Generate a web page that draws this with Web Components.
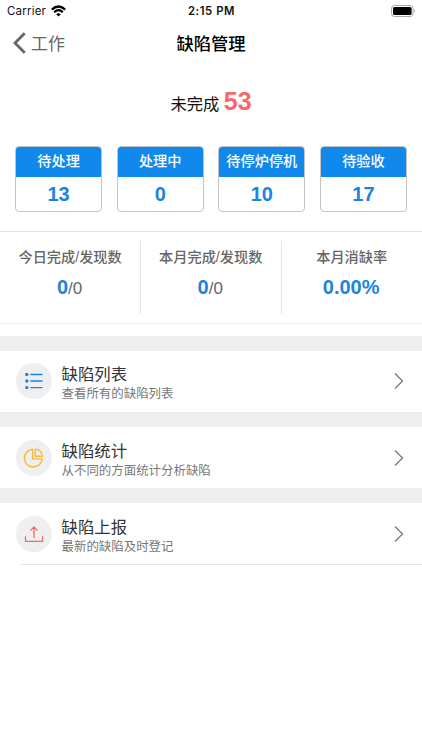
<!DOCTYPE html>
<html lang="zh-CN">
<head>
<meta charset="utf-8">
<title>缺陷管理</title>
<style>
	body {
		margin: 0;
		background: #fff;
		font-family: "Liberation Sans", "Noto Sans CJK SC", sans-serif;
	}
</style>
</head>
<body>
<defect-page></defect-page>

<script>
(function() {
	function attach(element, html) {
		const template = document.createElement('template');
		template.innerHTML = html;
		element.attachShadow({ mode: 'open' });
		element.shadowRoot.appendChild(template.content.cloneNode(true));
	}

	const icons = {
		list: `<svg viewBox="0 0 36 36" fill="none" stroke="#1b84de" stroke-width="1.3" stroke-linecap="round">
			<path d="M14.8 11.5H26M14.8 18H26M14.8 24.6H26"/>
			<g fill="#1b84de" stroke="none"><circle cx="10.8" cy="11.5" r="1.7"/><circle cx="10.8" cy="18" r="1.7"/><circle cx="10.8" cy="24.6" r="1.7"/></g>
		</svg>`,
		chart: `<svg viewBox="0 0 36 36" fill="none" stroke="#f8b739" stroke-width="1.4" stroke-linejoin="round">
			<path d="M16.6 9.3A8.9 8.9 0 1 0 26.2 18.9H16.6Z"/>
			<path d="M19.2 9.1V16.3H26.5A7.3 7.3 0 0 0 19.2 9.1Z"/>
		</svg>`,
		upload: `<svg viewBox="0 0 36 36" fill="none" stroke="#fa626a" stroke-width="1.2" stroke-linecap="round" stroke-linejoin="round">
			<path d="M9.5 20.7V25.4H26.5V20.7M18 21.7V11M14.9 14.2L18 11L21.1 14.2"/>
		</svg>`,
	};

	class StatusBar extends HTMLElement {
		connectedCallback() {
			attach(this, `
			<style>
			:host {
				display: grid;
				grid-template-columns: 1fr auto 1fr;
				align-items: center;
				height: 22px;
				padding: 0 6px 0 7px;
				font: 500 11.5px/22px Inter, sans-serif;
				color: #111;
			}
			.carrier {
				display: flex;
				align-items: center;
				gap: 5px;
				font-weight: 400;
				letter-spacing: 0.2px;
			}
			.time {
				font-weight: 600;
				font-size: 11.3px;
				letter-spacing: 0.55px;
			}
			.battery {
				justify-self: end;
			}
			svg {
				display: block;
			}
			</style>
			<div class="carrier"><span><slot></slot></span>
				<svg width="15" height="12" viewBox="0 0 15 12" fill="none" stroke="#000" stroke-width="2.2">
					<path d="M.8 4.6Q7.5-1.6 14.2 4.6M3.2 7.2Q7.5 3.2 11.8 7.2"/>
					<path d="M5.2 9.3Q7.5 7.2 9.8 9.3L7.5 11.6Z" fill="#000" stroke="none"/>
				</svg>
			</div>
			<div class="time"><slot name="time"></slot></div>
			<svg class="battery" width="25" height="12" viewBox="0 0 25 12">
				<rect x=".5" y=".5" width="21.6" height="11" rx="3" fill="#fff" stroke="#a6a6a6"/>
				<rect x="2" y="2" width="18.6" height="8" rx="1.6"/>
				<path d="M23.4 4.1Q25 6 23.4 7.9Z" fill="#999"/>
			</svg>
			`);
		}
	}

	class NavBar extends HTMLElement {
		connectedCallback() {
			attach(this, `
			<style>
			:host {
				display: grid;
				grid-template-columns: 1fr auto 1fr;
				align-items: start;
				height: 44px;
				padding: 0 12px;
				line-height: 44px;
			}
			.back {
				display: flex;
				align-items: center;
				gap: 5px;
				font-size: 17px;
				color: #666;
			}
			.title {
				font-size: 17.3px;
				font-weight: 500;
				color: #000;
			}
			.label {
				padding-top: 1px;
			}
			svg {
				margin-top: -3px;
			}
			</style>
			<div class="back">
				<svg width="14" height="22" viewBox="0 0 14 22" fill="none" stroke="#666" stroke-width="2.8"><path d="M12.7 1.2L3 11L12.7 20.8"/></svg>
				<span class="label"><slot name="back"></slot></span>
			</div>
			<div class="title"><slot></slot></div>
			`);
		}
	}

	class CountCard extends HTMLElement {
		connectedCallback() {
			attach(this, `
			<style>
			:host {
				display: block;
				box-sizing: border-box;
				height: 66px;
				border: 1px solid #c4c4c4;
				border-radius: 4px;
				overflow: hidden;
				text-align: center;
				white-space: nowrap;
			}
			.label {
				height: 30px;
				margin: -1px -1px 0;
				padding-top: 1px;
				background: #1188eb;
				color: #fff;
				font-size: 14.2px;
				font-weight: 500;
				line-height: 29px;
			}
			.count {
				color: #1b84de;
				font-size: 20px;
				font-weight: 700;
				line-height: 35px;
			}
			</style>
			<div class="label">${this.getAttribute('label')}</div>
			<div class="count"><slot></slot></div>
			`);
		}
	}

	class StatCell extends HTMLElement {
		connectedCallback() {
			attach(this, `
			<style>
			:host {
				display: block;
				height: 73px;
				text-align: center;
				color: #666;
				font-size: 17px;
				white-space: nowrap;
			}
			:host(:not(:last-child)) {
				box-shadow: 1px 0 #e6e6e6;
			}
			.label {
				height: 32px;
				font-size: 14.2px;
				font-weight: 500;
				line-height: 32px;
			}
			.value {
				margin-left: -1px;
				line-height: 29px;
			}
			b {
				color: #1b84de;
				font-size: 20px;
			}
			</style>
			<div class="label">${this.getAttribute('label')}</div>
			<div class="value"><b>${this.getAttribute('value')}</b><slot></slot></div>
			`);
		}
	}

	class MenuRow extends HTMLElement {
		connectedCallback() {
			attach(this, `
			<style>
			:host {
				display: flex;
				align-items: center;
				box-sizing: border-box;
				height: 76.4px;
				padding: 0 18px 0 15.5px;
				border-top: 15px solid #efefef;
			}
			.icon {
				width: 36px;
				height: 36px;
				border-radius: 50%;
				background: #efefef;
			}
			.text {
				flex: 1;
				margin-left: 10px;
				padding-top: 4px;
			}
			.title {
				font-size: 16.4px;
				line-height: 22px;
				color: #333;
			}
			.note {
				font-size: 12.45px;
				line-height: 18px;
				color: #777;
			}
			</style>
			<div class="icon">${icons[this.getAttribute('icon')]}</div>
			<div class="text">
				<div class="title"><slot></slot></div>
				<div class="note"><slot name="note"></slot></div>
			</div>
			<svg width="10" height="18" viewBox="0 0 10 18" fill="none" stroke="#777" stroke-width="1.3"><path d="M1 1.5L8.5 9L1 16.5"/></svg>
			`);
		}
	}

	class DefectPage extends HTMLElement {
		connectedCallback() {
			attach(this, `
			<style>
			:host {
				display: block;
				height: 750px;
				overflow: hidden;
			}
			.total {
				height: 80px;
				text-align: center;
				font-size: 16.3px;
				line-height: 70px;
				color: #111;
			}
			.total b {
				font-size: 25px;
				color: #f9686b;
			}
			.cards {
				display: grid;
				grid-template-columns: repeat(4, 1fr);
				gap: 14.5px;
				padding: 0 15px 19px;
			}
			.stats {
				display: grid;
				grid-template-columns: repeat(3, 1fr);
				height: 93px;
				box-sizing: border-box;
				padding-top: 9px;
				border-top: 1px solid #e3e3e3;
				border-bottom: 1px solid #f0f0f0;
				margin-bottom: 11.6px;
			}
			.stats stat-cell:not(:last-child) {
				margin-right: 0.5px;
			}
			.end {
				height: 1px;
				margin: -1px 0 0 20px;
				background: #e3e3e3;
			}
			</style>
			<status-bar>Carrier<span slot="time">2:15 PM</span></status-bar>
			<nav-bar><span slot="back">工作</span>缺陷管理</nav-bar>
			<div class="total">未完成 <b>53</b></div>
			<div class="cards">
				<count-card label="待处理">13</count-card>
				<count-card label="处理中">0</count-card>
				<count-card label="待停炉停机">10</count-card>
				<count-card label="待验收">17</count-card>
			</div>
			<div class="stats">
				<stat-cell label="今日完成/发现数" value="0">/0</stat-cell>
				<stat-cell label="本月完成/发现数" value="0">/0</stat-cell>
				<stat-cell label="本月消缺率" value="0.00%"></stat-cell>
			</div>
			<menu-row icon="list">缺陷列表<span slot="note">查看所有的缺陷列表</span></menu-row>
			<menu-row icon="chart">缺陷统计<span slot="note">从不同的方面统计分析缺陷</span></menu-row>
			<menu-row icon="upload">缺陷上报<span slot="note">最新的缺陷及时登记</span></menu-row>
			<div class="end"></div>
			`);
		}
	}

	window.customElements.define('status-bar', StatusBar);
	window.customElements.define('nav-bar', NavBar);
	window.customElements.define('count-card', CountCard);
	window.customElements.define('stat-cell', StatCell);
	window.customElements.define('menu-row', MenuRow);
	window.customElements.define('defect-page', DefectPage);
})();
</script>
</body>
</html>
